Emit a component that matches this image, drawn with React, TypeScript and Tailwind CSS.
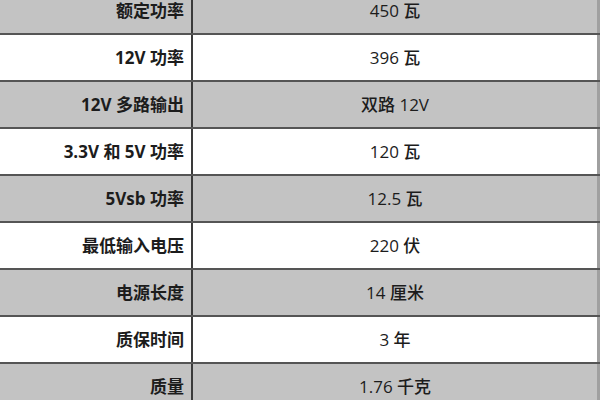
import React from "react";

type Spec = { label: string; value: string };

const specs: Spec[] = [
  { label: "额定功率", value: "450 瓦" },
  { label: "12V 功率", value: "396 瓦" },
  { label: "12V 多路输出", value: "双路 12V" },
  { label: "3.3V 和 5V 功率", value: "120 瓦" },
  { label: "5Vsb 功率", value: "12.5 瓦" },
  { label: "最低输入电压", value: "220 伏" },
  { label: "电源长度", value: "14 厘米" },
  { label: "质保时间", value: "3 年" },
  { label: "质量", value: "1.76 千克" },
];

export default function App() {
  return (
    <div
      className="w-[600px] h-[400px] overflow-hidden bg-white text-[#1c1c1c]"
      style={{ fontFamily: '"Open Sans", "Noto Sans CJK SC", sans-serif' }}
    >
      <div className="-mt-[12px] flex flex-col">
        {specs.map((s, i) => (
          <div
            key={s.label}
            className={`flex h-[47px] border-b-2 border-[#555] ${
              i % 2 === 0 ? "bg-[#c3c3c3]" : "bg-white"
            }`}
          >
            <div className="w-[193px] flex items-center justify-end pr-[7px] text-[17px] font-bold border-r-2 border-[#3a3a3a]">
              {s.label}
            </div>
            <div className="flex-1 flex items-center justify-center text-[17px] font-medium border-r-[3px] border-[#a0a0a0]">
              {s.value}
            </div>
          </div>
        ))}
      </div>
    </div>
  );
}
